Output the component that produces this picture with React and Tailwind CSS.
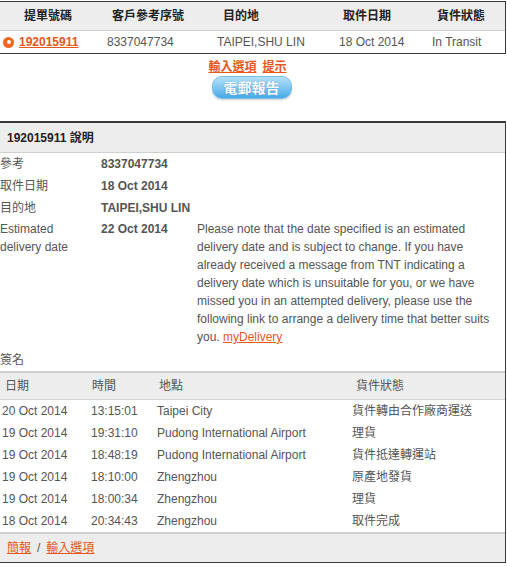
import React from "react";

const font = { fontFamily: '"Liberation Sans", Arial, "Noto Sans CJK TC", sans-serif' };

const events = [
  ["20 Oct 2014", "13:15:01", "Taipei City", "貨件轉由合作廠商運送"],
  ["19 Oct 2014", "19:31:10", "Pudong International Airport", "理貨"],
  ["19 Oct 2014", "18:48:19", "Pudong International Airport", "貨件抵達轉運站"],
  ["19 Oct 2014", "18:10:00", "Zhengzhou", "原產地發貨"],
  ["19 Oct 2014", "18:00:34", "Zhengzhou", "理貨"],
  ["18 Oct 2014", "20:34:43", "Zhengzhou", "取件完成"],
];

export default function App() {
  return (
    <div className="w-[507px] h-[567px] bg-white text-[12px] text-[#555] leading-[14px]" style={font}>
      {/* Top summary table */}
      <div className="w-[506px] mt-px border-t border-r border-b border-[#3a3a3a]">
        <div className="flex h-[29px] items-center bg-[#ededed] border-b border-[#cfcfcf] font-bold text-[#222]">
          <div className="w-[100px] pl-[24px]">提單號碼</div>
          <div className="w-[105px] pl-[12px]">客戶參考序號</div>
          <div className="w-[120px] pl-[18px]">目的地</div>
          <div className="w-[95px] pl-[18px]">取件日期</div>
          <div className="pl-[17px]">貨件狀態</div>
        </div>
        <div className="flex h-[22px] items-center">
          <div className="w-[100px] pl-[3px] flex items-center">
            <span className="w-[11px] h-[11px] rounded-full bg-[#f0661c] flex items-center justify-center">
              <span className="w-[4px] h-[4px] rounded-full bg-white"></span>
            </span>
            <a className="ml-[5px] font-bold text-[#e4571d] underline">192015911</a>
          </div>
          <div className="w-[105px] pl-[7px]">8337047734</div>
          <div className="w-[120px] pl-[12px]">TAIPEI,SHU LIN</div>
          <div className="w-[95px] pl-[14px]">18 Oct 2014</div>
          <div className="pl-[12px]">In Transit</div>
        </div>
      </div>

      {/* Links and button */}
      <div className="mt-[6px] flex justify-center pr-[12px] font-bold text-[#e4571d]">
        <a className="underline">輸入選項</a>
        <a className="underline ml-[6px]">提示</a>
      </div>
      <div className="mt-[2px] flex justify-center pr-[4px]">
        <div className="w-[80px] h-[23px] rounded-[10px] border border-[#7cc0e8] bg-gradient-to-b from-[#b3e2fa] to-[#45a9e8] shadow-[0_1px_2px_rgba(0,0,0,0.2)] flex items-center justify-center text-white font-bold text-[14px] [text-shadow:0_0_1px_rgba(0,60,120,0.5)]">
          電郵報告
        </div>
      </div>

      {/* Details box */}
      <div className="w-[506px] mt-[22px] border-t-2 border-r border-b border-[#3a3a3a]">
        <div className="h-[30px] flex items-center pl-[7px] bg-[#ededed] border-b border-[#cfcfcf] font-bold text-[#222]">
          192015911 說明
        </div>
        <div className="grid grid-cols-[101px_96px_1fr]">
          <div className="h-[22px] flex items-center">參考</div>
          <div className="h-[22px] flex items-center font-bold">8337047734</div>
          <div></div>
          <div className="h-[22px] flex items-center">取件日期</div>
          <div className="h-[22px] flex items-center font-bold">18 Oct 2014</div>
          <div></div>
          <div className="h-[22px] flex items-center">目的地</div>
          <div className="h-[22px] flex items-center font-bold whitespace-nowrap">TAIPEI,SHU LIN</div>
          <div></div>
          <div className="pt-px leading-[18px]">Estimated<br />delivery date</div>
          <div className="pt-px leading-[18px] font-bold">22 Oct 2014</div>
          <div className="pt-px pb-[3px] leading-[18px] whitespace-nowrap">
            Please note that the date specified is an estimated<br />
            delivery date and is subject to change. If you have<br />
            already received a message from TNT indicating a<br />
            delivery date which is unsuitable for you, or we have<br />
            missed you in an attempted delivery, please use the<br />
            following link to arrange a delivery time that better suits<br />
            you. <a className="text-[#e4571d] underline">myDelivery</a>
          </div>
          <div className="h-[22px] flex items-center">簽名</div>
          <div></div>
          <div></div>
        </div>
        <div className="border-t-2 border-[#cfcfcf] bg-[#ededed] h-[29px] flex items-center border-b border-b-[#d4d4d4]">
          <div className="w-[91px] pl-[5px]">日期</div>
          <div className="w-[66px] pl-px">時間</div>
          <div className="w-[195px] pl-[2px]">地點</div>
          <div className="pl-[4px]">貨件狀態</div>
        </div>
        {events.map((e, i) => (
          <div key={i} className="h-[22px] flex items-center whitespace-nowrap">
            <div className="w-[91px] pl-[2px]">{e[0]}</div>
            <div className="w-[66px]">{e[1]}</div>
            <div className="w-[195px]">{e[2]}</div>
            <div>{e[3]}</div>
          </div>
        ))}
        <div className="border-t-2 border-[#cfcfcf] bg-[#ededed] h-[30px] flex items-center pl-[7px]">
          <a className="text-[#e4571d] underline">簡報</a>
          <span className="mx-[6px] text-[#555]">/</span>
          <a className="text-[#e4571d] underline">輸入選項</a>
        </div>
      </div>
    </div>
  );
}
